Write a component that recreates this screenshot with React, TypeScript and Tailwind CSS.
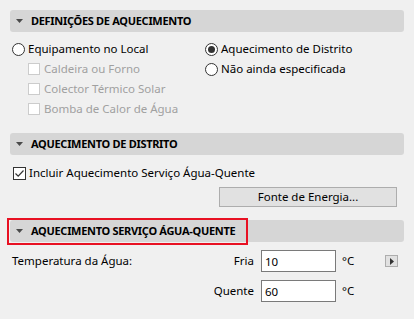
import React from 'react';

const font = { fontFamily: '"Noto Sans", "Open Sans", sans-serif' };

const SectionHeader = ({ title, highlight }: { title: string; highlight?: boolean }) => (
  <div className="relative flex h-[22px] items-center rounded-[3px] bg-[#d6d6d6]">
    <svg width="7" height="4" viewBox="0 0 7 4" className="ml-[6px]">
      <path d="M0 0 H7 L3.5 4 Z" fill="#4a4a4a" />
    </svg>
    <span className="ml-[8px] text-[11px] font-bold tracking-[-0.3px] text-black">{title}</span>
    {highlight && (
      <div className="absolute left-[-3px] top-[-2px] h-[27px] w-[241px] border-2 border-[#e81123]" />
    )}
  </div>
);

const Radio = ({ checked, label }: { checked?: boolean; label: string }) => (
  <label className="flex h-[20px] items-center">
    <span className="flex h-[13px] w-[13px] items-center justify-center rounded-full border border-[#333] bg-white">
      {checked && <span className="h-[7px] w-[7px] rounded-full bg-[#333]" />}
    </span>
    <span className="ml-[3px] text-[11.5px] text-black">{label}</span>
  </label>
);

const Checkbox = ({ checked, disabled, label }: { checked?: boolean; disabled?: boolean; label: string }) => (
  <label className="flex h-[20px] items-center">
    <span
      className={
        disabled
          ? 'flex h-[12px] w-[12px] items-center justify-center border border-[#cccccc] bg-white'
          : 'flex h-[13px] w-[13px] items-center justify-center border border-[#333] bg-white'
      }
    >
      {checked && (
        <svg width="11" height="11" viewBox="0 0 11 11">
          <path d="M1.5 5.5 L4.2 8.2 L9.5 2.5" fill="none" stroke="#333" strokeWidth="1.2" />
        </svg>
      )}
    </span>
    <span className={disabled ? 'ml-[4px] text-[11.5px] text-[#a0a0a0]' : 'ml-[3px] text-[11.5px] text-black'}>
      {label}
    </span>
  </label>
);

export default function App() {
  return (
    <div className="h-[319px] w-[414px] overflow-hidden bg-[#f0f0f0] px-[10px] pt-[10px]" style={font}>
      <SectionHeader title="DEFINIÇÕES DE AQUECIMENTO" />

      <div className="mt-[7px] flex">
        <div className="w-[195px] pl-[2px]">
          <Radio label="Equipamento no Local" />
          <div className="pl-[16px]">
            <Checkbox disabled label="Caldeira ou Forno" />
            <Checkbox disabled label="Colector Térmico Solar" />
            <Checkbox disabled label="Bomba de Calor de Água" />
          </div>
        </div>
        <div>
          <Radio checked label="Aquecimento de Distrito" />
          <Radio label="Não ainda especificada" />
        </div>
      </div>

      <div className="mt-[14px]">
        <SectionHeader title="AQUECIMENTO DE DISTRITO" />
      </div>

      <div className="mt-[8px] pl-[3px]">
        <Checkbox checked label="Incluir Aquecimento Serviço Água-Quente" />
      </div>

      <div className="mt-[4px] flex justify-end pr-[7px]">
        <button className="h-[20px] w-[178px] border border-[#adadad] bg-[#e1e1e1] text-[11.5px] text-black">
          Fonte de Energia...
        </button>
      </div>

      <div className="mt-[13px]">
        <SectionHeader title="AQUECIMENTO SERVIÇO ÁGUA-QUENTE" highlight />
      </div>

      <div className="mt-[8px] flex h-[22px] items-center text-[11.5px] text-black">
        <div className="w-[197px] pl-[2px]">Temperatura da Água:</div>
        <div className="w-[47px] text-right">Fria</div>
        <input
          readOnly
          value="10"
          className="ml-[7px] h-[22px] w-[75px] border border-[#7a7a7a] bg-white px-[3px] text-[11.5px] outline-none"
        />
        <span className="ml-[6px]">°C</span>
        <div className="ml-auto mr-[6px] flex h-[12px] w-[13px] items-center justify-center border border-[#adadad] bg-[#e1e1e1]">
          <svg width="4" height="7" viewBox="0 0 4 7">
            <path d="M0 0 L4 3.5 L0 7 Z" fill="#333" />
          </svg>
        </div>
      </div>

      <div className="mt-[8px] flex h-[22px] items-center text-[11.5px] text-black">
        <div className="w-[197px]" />
        <div className="w-[47px] text-right">Quente</div>
        <input
          readOnly
          value="60"
          className="ml-[7px] h-[22px] w-[75px] border border-[#7a7a7a] bg-white px-[3px] text-[11.5px] outline-none"
        />
        <span className="ml-[6px]">°C</span>
      </div>
    </div>
  );
}
